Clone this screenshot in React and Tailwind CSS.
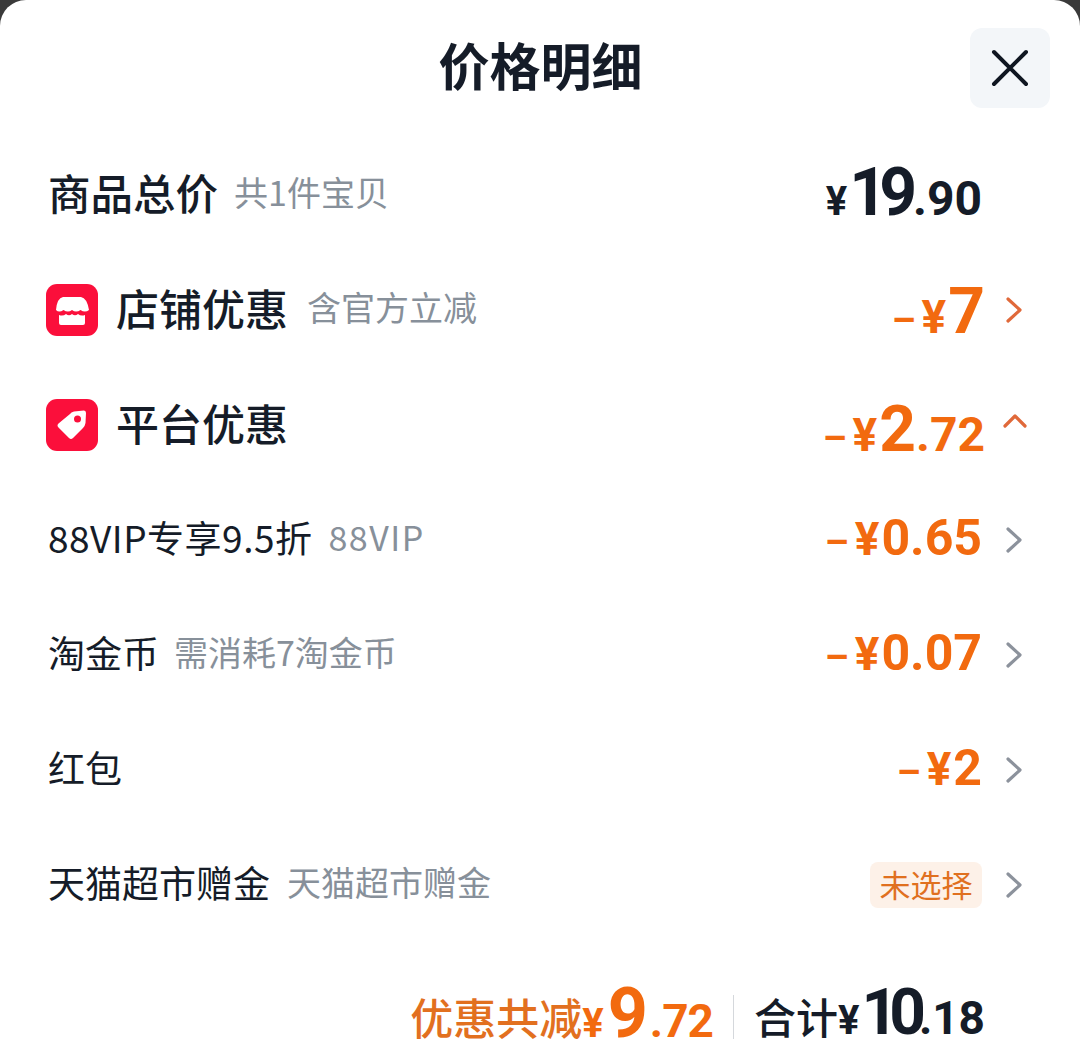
import React from 'react';

const cjk = { fontFamily: '"Noto Sans CJK SC", "Noto Sans", sans-serif' };
const num = { fontFamily: 'Roboto, "Liberation Sans", sans-serif' };

function Chevron({ dir = 'right', color = '#8c929c' }) {
  const d = dir === 'up' ? 'M2 14 L12 4 L22 14' : 'M5 2 L17 13 L5 24';
  return (
    <svg width="24" height="26" viewBox="0 0 24 26" fill="none" stroke={color} strokeWidth="3.2" strokeLinecap="round" strokeLinejoin="round">
      <path d={d} />
    </svg>
  );
}

function StoreIcon() {
  return (
    <svg width="52" height="52" viewBox="0 0 52 52">
      <rect width="52" height="52" rx="11" fill="#fb0f3b" />
      <path d="M17 13 H35 Q41 14 43 26 Q39 29 34.5 26 Q30 29 26 26 Q22 29 17.5 26 Q13 29 10 26 Q11 14 17 13 Z" fill="#fff" />
      <path d="M13 31 Q17 32.5 20 30 Q23 32.5 26 30 Q29 32.5 32 30 Q35 32.5 39 31 V39 Q39 41 37 41 H15 Q13 41 13 39 Z" fill="#fff" />
    </svg>
  );
}

function TagIcon() {
  return (
    <svg width="52" height="52" viewBox="0 0 52 52">
      <rect width="52" height="52" rx="11" fill="#fb0f3b" />
      <path d="M24 15 Q25 13 28 12.5 L38 11.5 Q40 11.5 40 14 L39.5 24 Q39 27 37 29 L27 39 Q25 41 23 39 L12.5 28.5 Q10.5 26.5 12.5 24.5 Z" fill="#fff" />
      <circle cx="31.5" cy="20" r="3.5" fill="#fb0f3b" />
    </svg>
  );
}

function Money({ big, small, minus, yen, bigSize, smallSize, color, className = '' }) {
  return (
    <div className={`flex items-baseline font-bold ${color} ${className}`} style={num}>
      {minus && <span className="mr-[6px] text-[38px]">–</span>}
      <span className={`${yen} mr-[2px]`}>¥</span>
      <span className={bigSize}>{big}</span>
      {small && <span className={smallSize}>{small}</span>}
    </div>
  );
}

function Row({ icon, label, sub, labelClass = 'text-[37px] font-normal', subClass = 'ml-[17px]', right, chevron }) {
  return (
    <div className="flex h-[115px] items-center pl-[46px]">
      {icon && <div className="mr-[18px] flex">{icon}</div>}
      <span className={`${labelClass} pb-[5px] leading-none text-[#151c28] ${icon ? '' : 'ml-[2px]'}`}>{label}</span>
      {sub && <span className={`pb-[5px] text-[34px] leading-none text-[#87909a] ${subClass}`}>{sub}</span>}
      <div className="ml-auto flex items-center">{right}</div>
      <div className="flex w-[98px] justify-end pr-[53px]">{chevron}</div>
    </div>
  );
}

const orange = 'text-[#f26a0f]';
const dark = 'text-[#151c28]';

export default function App() {
  return (
    <div className="h-[1055px] w-[1080px] overflow-hidden bg-[#3a3a3a]" style={cjk}>
      <div className="h-full rounded-t-[26px] bg-white">
        <div className="flex h-[137px] items-start justify-between pl-[1px]">
          <div className="w-[80px]" />
          <h1 className="mt-[33px] ml-[30px] text-[51px] leading-[62px] font-bold text-[#151c28]">价格明细</h1>
          <div className="mt-[28px] mr-[30px] flex h-[80px] w-[80px] items-center justify-center rounded-[12px] bg-[#f3f6f9]">
            <svg width="38" height="38" viewBox="0 0 38 38" fill="none" stroke="#0f1621" strokeWidth="4" strokeLinecap="round">
              <path d="M3 3 L35 35 M35 3 L3 35" />
            </svg>
          </div>
        </div>

        <Row
          label="商品总价"
          labelClass="text-[42.5px] font-medium"
          sub="共1件宝贝"
          subClass="ml-[16px] text-[33px]"
          right={<Money big="19" small=".90" yen="text-[40px]" bigSize="text-[66px] tracking-[-8px]" smallSize="text-[48px] ml-[4px]" color={dark} className="-mt-[4px]" />}
        />
        <Row
          icon={<StoreIcon />}
          label="店铺优惠"
          labelClass="text-[43px] font-medium"
          sub="含官方立减"
          subClass="ml-[19px]"
          right={<Money minus big="7" yen="text-[46px]" bigSize="text-[64px]" color={orange} className="-mr-[3px] mt-[4px]" />}
          chevron={<Chevron color="#e0693a" />}
        />
        <Row
          icon={<TagIcon />}
          label="平台优惠"
          labelClass="text-[43px] font-medium"
          right={<Money minus big="2" small=".72" yen="text-[46px]" bigSize="text-[64px]" smallSize="text-[48px]" color={orange} className="-mr-[3px] mt-[10px]" />}
          chevron={<Chevron dir="up" color="#e0693a" />}
        />
        <Row
          label="88VIP专享9.5折"
          labelClass="text-[37px] font-normal tracking-[0.5px]"
          sub="88VIP"
          subClass="ml-[16px] tracking-[1.5px]"
          right={<Money minus big="0.65" yen="text-[46px]" bigSize="text-[50px]" color={orange} className="-mt-[2px]" />}
          chevron={<Chevron />}
        />
        <Row
          label="淘金币"
          sub="需消耗7淘金币"
          subClass="ml-[15px]"
          right={<Money minus big="0.07" yen="text-[46px]" bigSize="text-[50px]" color={orange} className="-mt-[2px]" />}
          chevron={<Chevron />}
        />
        <Row
          label="红包"
          right={<Money minus big="2" yen="text-[46px]" bigSize="text-[50px]" color={orange} className="-mt-[2px]" />}
          chevron={<Chevron />}
        />
        <Row
          label="天猫超市赠金"
          sub="天猫超市赠金"
          right={<span className="flex h-[46px] w-[112px] items-center justify-center rounded-[8px] bg-[#fdf1e8] text-[31px] text-[#e0701f]">未选择</span>}
          chevron={<Chevron />}
        />

        <div className="mt-[36px] flex h-[70px] items-center justify-end pr-[95px] leading-none">
          <span className="pt-[6px] text-[43px] leading-none font-medium text-[#e2701f]">优惠共减</span>
          <Money big="9" small=".72" yen="text-[40px]" bigSize="text-[70px] ml-[2px]" smallSize="text-[46px] ml-[2px] tracking-[-1px]" color={orange} />
          <div className="mx-[20px] mt-[8px] h-[44px] w-[1px] bg-[#d5d8dc]" />
          <span className="pt-[6px] text-[42px] leading-none font-medium text-[#151c28]">合计</span>
          <Money big="10" small=".18" yen="text-[40px]" bigSize="text-[64px] tracking-[-9px]" smallSize="text-[46px] ml-[2px]" color={dark} />
        </div>
      </div>
    </div>
  );
}
